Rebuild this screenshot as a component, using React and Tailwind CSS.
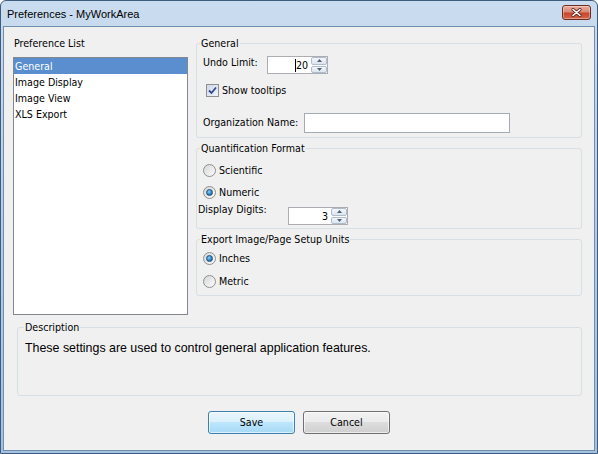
import React from "react";

const ui = "font-['DejaVu_Sans_Condensed','Liberation_Sans',sans-serif] text-[10.6px] leading-[13px] text-black";

function Group({ title, className, children }) {
    return (
        <fieldset className={"border border-[#d5dfe5] rounded-[3px] min-w-0 " + className}>
            <legend className="ml-[3px] px-[1px] leading-[13px]">{title}</legend>
            {children}
        </fieldset>
    );
}

function SpinButton({ up }) {
    return (
        <div className="flex-1 flex items-center justify-center border border-[#b1bccb] rounded-[2px] bg-linear-to-b from-[#f4f7fb] to-[#dbe4ee]">
            <svg width="5" height="3" viewBox="0 0 5 3">
                {up ? <path d="M0 3 L2.5 0 L5 3 Z" fill="#4e5f78" /> : <path d="M0 0 L2.5 3 L5 0 Z" fill="#4e5f78" />}
            </svg>
        </div>
    );
}

function Spin({ value, className, caret }) {
    return (
        <div className={"flex h-[18px] border border-[#abadb3] bg-white " + className}>
            <div className="flex-1 flex items-center justify-end pr-[3px]">
                {caret && <span className="w-[1px] h-[13px] bg-black" />}
                <span>{value}</span>
            </div>
            <div className="w-[16px] flex flex-col gap-[1px]">
                <SpinButton up />
                <SpinButton />
            </div>
        </div>
    );
}

function Radio({ checked, label }) {
    return (
        <div className="flex items-center h-[13px]">
            <span className="w-[13px] h-[13px] rounded-full border border-[#8e8f8f] bg-linear-to-br from-[#d6d6d6] to-[#fdfdfd] flex items-center justify-center">
                {checked && (
                    <span className="w-[7px] h-[7px] rounded-full border border-[#1c4f7a] bg-[radial-gradient(circle_at_40%_35%,#8fd0f5,#2a7fc0_60%,#17507f)]" />
                )}
            </span>
            <span className="ml-[3px]">{label}</span>
        </div>
    );
}

function Checkbox({ label }) {
    return (
        <div className="flex items-center h-[13px] ml-[3px]">
            <span className="w-[13px] h-[13px] border border-[#8e8f8f] bg-linear-to-br from-[#cdd7ea] to-[#f1f4fa] flex items-center justify-center">
                <svg width="9" height="9" viewBox="0 0 9 9">
                    <path d="M1 4.5 L3.5 7 L8 1.5" fill="none" stroke="#34498a" strokeWidth="1.8" />
                </svg>
            </span>
            <span className="ml-[3px]">{label}</span>
        </div>
    );
}

function Button({ children, primary }) {
    return (
        <div
            className={
                primary
                    ? "w-[87px] h-[23px] flex items-center justify-center rounded-[3px] border border-[#3c7fb1] bg-[linear-gradient(#eaf6fd,#d9f0fc_50%,#bee6fd_50%,#a7d9f5)] shadow-[inset_0_0_0_1px_rgba(255,255,255,0.6)]"
                    : "w-[87px] h-[23px] flex items-center justify-center rounded-[3px] border border-[#707070] bg-[linear-gradient(#f2f2f2,#ebebeb_50%,#dddddd_50%,#cfcfcf)] shadow-[inset_0_0_0_1px_rgba(255,255,255,0.6)]"
            }
        >
            {children}
        </div>
    );
}

export default function App() {
    return (
        <div className={"w-[598px] h-[454px] " + ui}>
            <div className="w-full h-full flex flex-col rounded-t-[6px] border border-[#3e5d7e] bg-linear-to-b from-[#cadcef] via-[#b5cde7] to-[#a4c1e0]">
                {/* title bar */}
                <div className="h-[25px] flex items-start justify-between pl-[6px] pr-[6px]">
                    <span className="mt-[6px] font-['Liberation_Sans',sans-serif] text-[11px] leading-[14px] text-black">
                        Preferences - MyWorkArea
                    </span>
                    <div className="mt-[4px] w-[29px] h-[15px] rounded-[3px] border border-[#6e2b20] bg-[linear-gradient(#e9ad9c,#d88a76_45%,#c8452c_55%,#d0674e)] flex items-center justify-center shadow-[inset_0_0_0_1px_rgba(255,255,255,0.35)]">
                        <svg width="11" height="9" viewBox="0 0 11 9">
                            <path d="M2 1.5 L9 7.5 M9 1.5 L2 7.5" stroke="#5a2418" strokeWidth="3" strokeLinecap="round" />
                            <path d="M2 1.5 L9 7.5 M9 1.5 L2 7.5" stroke="#ffffff" strokeWidth="1.6" strokeLinecap="round" />
                        </svg>
                    </div>
                </div>

                {/* client area */}
                <div className="flex-1 mx-[2px] mb-[2px] border border-[#6f8eae] bg-[#f0f0f0] flex flex-col">
                    <div className="flex pt-[10px] pl-[9px] pr-[12px]">
                        {/* preference list */}
                        <div className="flex flex-col w-[175px]">
                            <span className="pl-[1px]">Preference List</span>
                            <div className="mt-[7px] h-[258px] border border-[#828790] bg-white">
                                <div className="leading-[16px] pl-[1px] bg-[#5a8ecf] text-white">General</div>
                                <div className="leading-[16px] pl-[1px]">Image Display</div>
                                <div className="leading-[16px] pl-[1px]">Image View</div>
                                <div className="leading-[16px] pl-[1px]">XLS Export</div>
                            </div>
                        </div>

                        {/* settings */}
                        <div className="ml-[8px] flex-1 flex flex-col">
                            <Group title="General" className="">
                                <div className="pt-[6px] pb-[4px] px-[6px] flex flex-col">
                                    <div className="flex items-start">
                                        <span className="w-[64px]">Undo Limit:</span>
                                        <Spin value="20" caret className="w-[61px]" />
                                    </div>
                                    <div className="mt-[10px]">
                                        <Checkbox label="Show tooltips" />
                                    </div>
                                    <div className="mt-[16px] flex items-start">
                                        <span className="w-[101px] pt-[3px] whitespace-nowrap">Organization Name:</span>
                                        <div className="w-[206px] h-[20px] border border-[#a5abb4] bg-white" />
                                    </div>
                                </div>
                            </Group>

                            <Group title="Quantification Format" className="mt-[4px]">
                                <div className="pt-[9px] pb-[3px] px-[6px] flex flex-col">
                                    <Radio label="Scientific" />
                                    <div className="mt-[9px]">
                                        <Radio checked label="Numeric" />
                                    </div>
                                    <div className="mt-[4px] -ml-[5px] flex items-start">
                                        <span className="w-[90px]">Display Digits:</span>
                                        <Spin value="3" className="mt-[4px] w-[60px]" />
                                    </div>
                                </div>
                            </Group>

                            <Group title="Export Image/Page Setup Units" className="mt-[4px]">
                                <div className="pt-[6px] pb-[7px] px-[6px] flex flex-col">
                                    <Radio checked label="Inches" />
                                    <div className="mt-[10px]">
                                        <Radio label="Metric" />
                                    </div>
                                </div>
                            </Group>
                        </div>
                    </div>

                    {/* description */}
                    <fieldset className="mt-[6px] ml-[13px] mr-[12px] h-[75px] border border-[#d5dfe5] rounded-[3px] min-w-0">
                        <legend className="ml-[6px] px-[1px] leading-[13px]">Description</legend>
                        <p className="pt-[7px] pl-[7px] font-['Liberation_Sans',sans-serif] text-[12.4px] leading-[15px]">
                            These settings are used to control general application features.
                        </p>
                    </fieldset>

                    {/* buttons */}
                    <div className="mt-[15px] flex justify-center gap-[8px]">
                        <Button primary>Save</Button>
                        <Button>Cancel</Button>
                    </div>
                </div>
            </div>
        </div>
    );
}
